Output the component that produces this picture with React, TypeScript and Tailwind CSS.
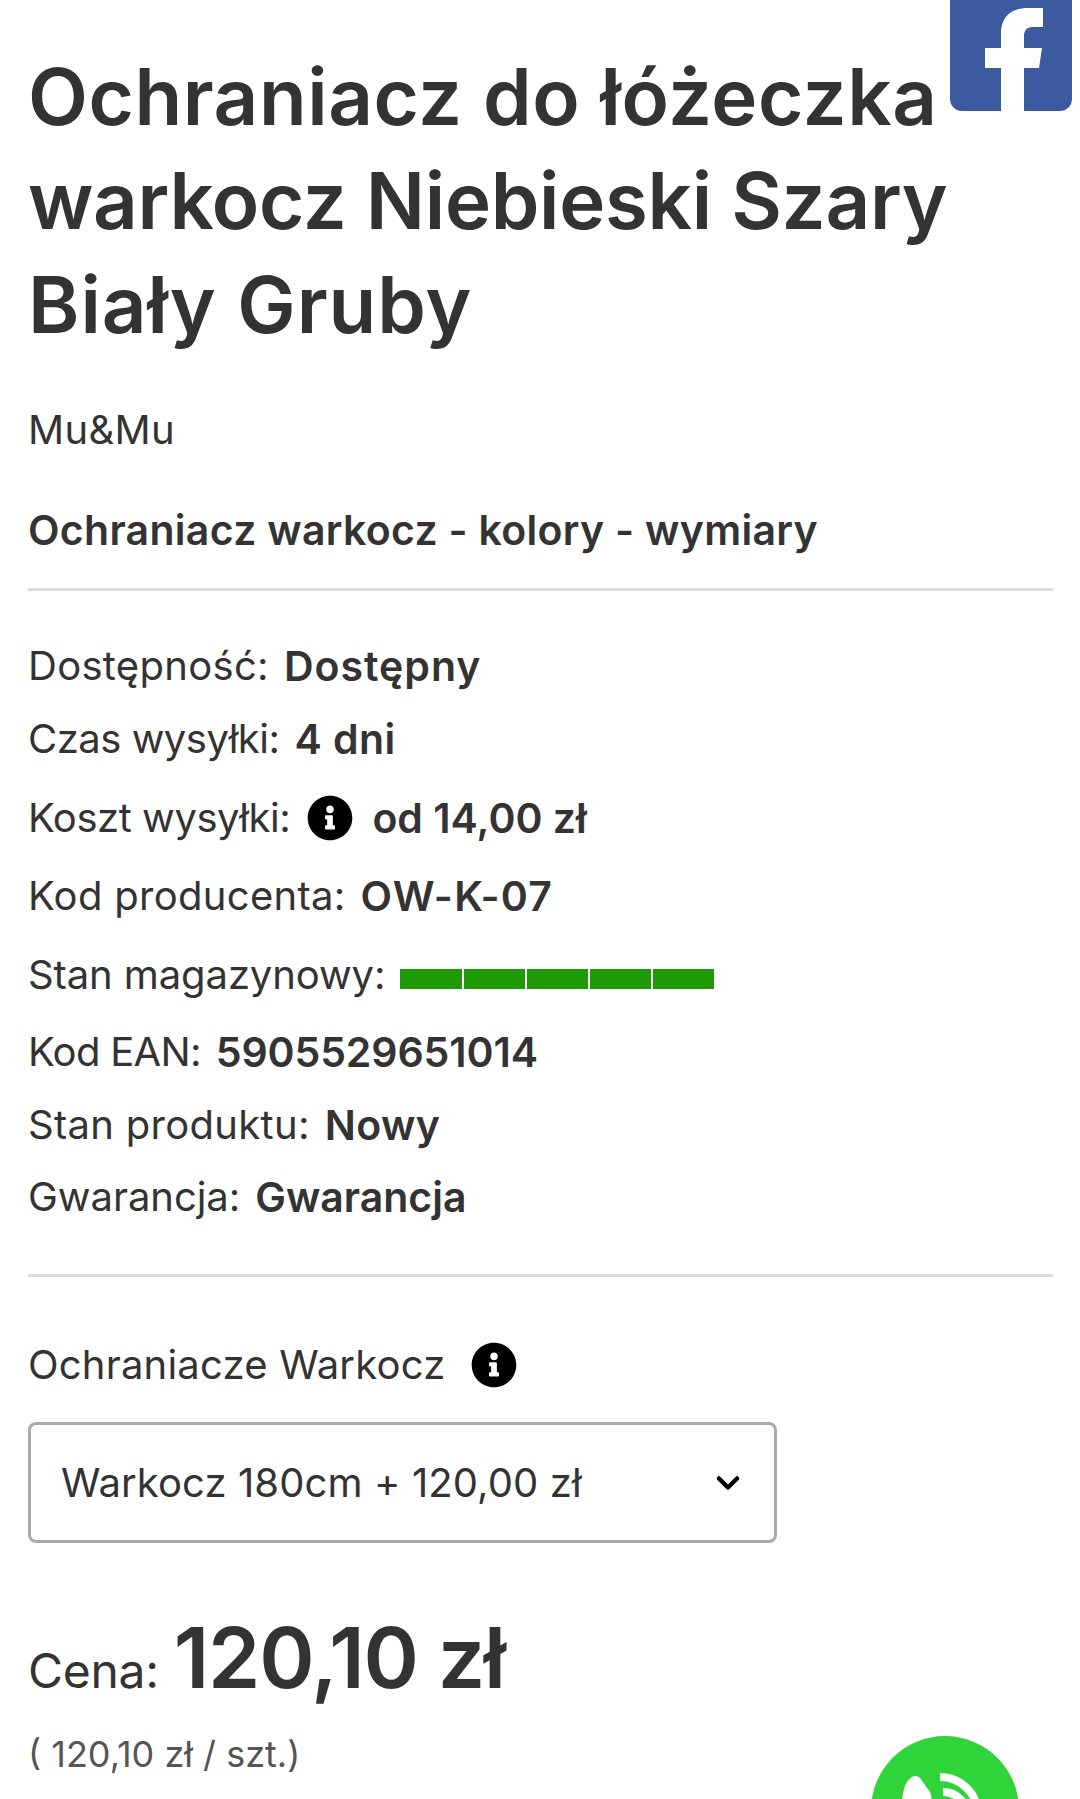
import React from 'react';
import { FaInfoCircle } from 'react-icons/fa';
import { ChevronDown } from 'lucide-react';

const InfoIcon: React.FC<{ className?: string }> = ({ className }) => (
  <FaInfoCircle className={`w-[46px] h-[46px] text-black shrink-0 ${className ?? ''}`} />
);

const Row: React.FC<{ label: string; labelClass?: string; className?: string; children: React.ReactNode }> = ({ label, labelClass, className, children }) => (
  <div className={`flex items-center gap-[15px] whitespace-nowrap ${className ?? ''}`}>
    <span className={labelClass}>{label}</span>
    {children}
  </div>
);

const Val: React.FC<{ className?: string; children: React.ReactNode }> = ({ className, children }) => (
  <span className={`text-[41px] font-semibold ${className ?? 'tracking-[0.4px]'}`}>{children}</span>
);

const FacebookLogo = () => (
  <svg viewBox="0 0 124 112" className="absolute left-[949px] top-0 h-[112px] w-[124px]">
    <rect x="1" y="-20" width="122" height="131" rx="12" fill="#3b5aa0" />
    <path
      fill="#fff"
      d="M52 111V68H36V48H52V33C52 16 63 8 79 8H94V27H84C77 27 75 31 75 37V48H93L90 68H75V111Z"
    />
  </svg>
);

const CallButton = () => (
  <svg viewBox="0 0 148 148" className="absolute left-[871px] top-[1736px] h-[148px] w-[148px]">
    <circle cx="74" cy="74" r="74" fill="#2fd33a" />
    <path fill="#fff" d="M31 70C31 54 35 44 41 41C44 39 47 40 49 42L59 56C61 60 61 66 60 72Z" />
    <path fill="none" stroke="#fff" strokeWidth="8" d="M69 41A38 38 0 0 1 107 79" />
    <path fill="none" stroke="#fff" strokeWidth="8" d="M72 56A25 25 0 0 1 97 81" />
  </svg>
);

export default function App() {
  return (
    <div className="relative h-[1799px] w-[1080px] overflow-hidden bg-white px-[28px] pt-[45px] font-['Inter',sans-serif] text-[40px] leading-[60px] tracking-[0.3px] text-[#333]">
      <h1 className="text-[78px] leading-[104px] font-semibold tracking-[0.55px] whitespace-nowrap">
        Ochraniacz do łóżeczka
        <br />
        <span className="tracking-[-0.3px]">warkocz Niebieski Szary</span>
        <br />
        <span className="tracking-[1px]">Biały Gruby</span>
      </h1>

      <p className="mt-[43px]">Mu&amp;Mu</p>
      <p className="mt-[40px] text-[41px] font-semibold">Ochraniacz warkocz - kolory - wymiary</p>

      <hr className="mt-[28px] w-[1025px] border-t-[3px] border-[#ddd]" />

      <div className="mt-[40px] flex flex-col">
        <Row label="Dostępność:" className="h-[70px]"><Val className="tracking-[1px]">Dostępny</Val></Row>
        <Row label="Czas wysyłki:" labelClass="tracking-[-0.5px]" className="h-[76px]"><Val>4 dni</Val></Row>
        <Row label="Koszt wysyłki:" labelClass="tracking-[-0.45px]" className="h-[82px]">
          <InfoIcon className="ml-[2px]" />
          <span className="ml-[4px]"><Val className="tracking-normal">od 14,00 zł</Val></span>
        </Row>
        <Row label="Kod producenta:" className="h-[74px]"><Val className="tracking-[1.2px]">OW-K-07</Val></Row>
        <Row label="Stan magazynowy:" labelClass="tracking-[-0.1px]" className="h-[84px]">
          <div className="mt-[7px] flex h-[20px] w-[314px] gap-[2px]">
            <div className="flex-1 bg-[#1f9a06]" />
            <div className="flex-1 bg-[#1f9a06]" />
            <div className="flex-1 bg-[#1f9a06]" />
            <div className="flex-1 bg-[#1f9a06]" />
            <div className="flex-1 bg-[#1f9a06]" />
          </div>
        </Row>
        <Row label="Kod EAN:" labelClass="tracking-[-0.7px]" className="h-[70px]"><Val className="tracking-[-0.1px]">5905529651014</Val></Row>
        <Row label="Stan produktu:" className="h-[76px]"><Val>Nowy</Val></Row>
        <Row label="Gwarancja:" labelClass="tracking-[-0.05px]" className="h-[68px]"><Val className="tracking-normal">Gwarancja</Val></Row>
      </div>

      <hr className="mt-[43px] w-[1025px] border-t-[3px] border-[#ddd]" />

      <div className="mt-[58px] flex items-center gap-[26px] whitespace-nowrap tracking-[0.2px]">
        <span>Ochraniacze Warkocz</span>
        <InfoIcon />
      </div>

      <div className="mt-[27px] flex h-[121px] w-[749px] items-center justify-between rounded-[8px] border-[3px] border-[#aaa] pl-[30px] pr-[28px]">
        <span className="tracking-[0.1px]">Warkocz 180cm + 120,00 zł</span>
        <ChevronDown className="h-[36px] w-[36px] text-black" strokeWidth={3} />
      </div>

      <div className="mt-[73px] flex items-baseline gap-[15px] whitespace-nowrap">
        <span className="text-[48px] tracking-[-0.3px]">Cena:</span>
        <span className="text-[84px] leading-[84px] font-semibold tracking-[-1.2px]">120,10 zł</span>
      </div>

      <p className="mt-[23px] text-[36px] tracking-normal text-[#555]">( 120,10 zł / szt.)</p>

      <FacebookLogo />
      <CallButton />
    </div>
  );
}
